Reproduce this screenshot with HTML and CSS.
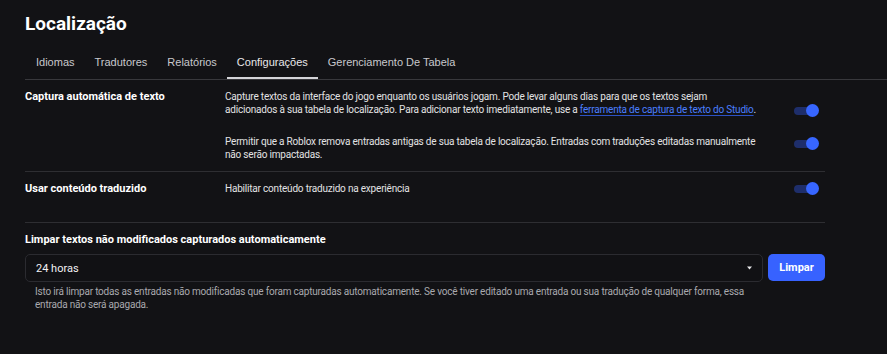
FILE: index.html
```html
<!DOCTYPE html>
<html lang="pt-BR">
  <head>
    <meta charset="UTF-8" />
    <meta name="viewport" content="width=device-width, initial-scale=1.0" />
    <title>Localização</title>
    <link rel="stylesheet" href="styles.css">
  </head>
  <body>
    <div class="page">
      <h1 class="title">Localização</h1>
      <nav class="tabs">
        <a class="tab">Idiomas</a>
        <a class="tab">Tradutores</a>
        <a class="tab">Relatórios</a>
        <a class="tab active">Configurações</a>
        <a class="tab">Gerenciamento De Tabela</a>
      </nav>

      <div class="content">
        <section class="setting">
          <div class="setting-label">Captura automática de texto</div>
          <div class="setting-body">
            <div class="option">
              <p class="option-text">Capture textos da interface do jogo enquanto os usuários jogam. Pode levar alguns dias para que os textos sejam<br>adicionados à sua tabela de localização. Para adicionar texto imediatamente, use a <a class="link">ferramenta de captura de texto do Studio</a>.</p>
              <span class="switch switch-low"></span>
            </div>
            <div class="option">
              <p class="option-text">Permitir que a Roblox remova entradas antigas de sua tabela de localização. Entradas com traduções editadas manualmente<br>não serão impactadas.</p>
              <span class="switch"></span>
            </div>
          </div>
        </section>

        <section class="setting setting-single">
          <div class="setting-label">Usar conteúdo traduzido</div>
          <div class="setting-body">
            <div class="option">
              <p class="option-text">Habilitar conteúdo traduzido na experiência</p>
              <span class="switch switch-flush"></span>
            </div>
          </div>
        </section>

        <section class="cleanup">
          <div class="cleanup-label">Limpar textos não modificados capturados automaticamente</div>
          <div class="cleanup-row">
            <div class="select">
              <span>24 horas</span>
              <svg class="caret" width="5" height="4" viewBox="0 0 5 4"><path d="M0 0.5h5L2.5 3.5z" fill="#e8e8ea"/></svg>
            </div>
            <button class="btn">Limpar</button>
          </div>
          <p class="hint">Isto irá limpar todas as entradas não modificadas que foram capturadas automaticamente. Se você tiver editado uma entrada ou sua tradução de qualquer forma, essa<br>entrada não será apagada.</p>
        </section>
      </div>
    </div>
  </body>
</html>
```

FILE: styles.css
```css
* {
  margin: 0;
  padding: 0;
  box-sizing: border-box;
}
body {
  background-color: #121215;
  color: #e6e6e8;
  font-family: Roboto, "Liberation Sans", sans-serif;
}
.page {
  padding-left: 25px;
}
.title {
  padding-top: 12px;
  font-size: 19px;
  line-height: 24px;
  font-weight: 700;
  color: #ffffff;
}
.tabs {
  display: flex;
  margin-top: 10px;
  border-bottom: 1px solid #38383c;
}
.tab {
  padding: 9px 10px 8px;
  font-family: "Liberation Sans", Arial, sans-serif;
  font-size: 11px;
  line-height: 14px;
  color: #c8c8cc;
  border-bottom: 2px solid transparent;
  cursor: pointer;
}
.tab:first-child {
  padding-left: 11px;
}
.tab.active {
  color: #e8e8ea;
  border-bottom-color: #d4d4d8;
}
.content {
  width: 800px;
}
.setting {
  display: flex;
  padding: 10px 0;
  border-bottom: 1px solid #2e2e32;
}
.setting-single {
  padding-bottom: 27px;
}
.setting-label,
.cleanup-label {
  font-size: 11px;
  line-height: 13px;
  font-weight: 700;
  color: #ffffff;
}
.setting-label {
  width: 200px;
  flex-shrink: 0;
}
.setting-body {
  flex: 1;
  display: flex;
  flex-direction: column;
  gap: 18px;
}
.option {
  display: flex;
  justify-content: space-between;
  align-items: flex-start;
  padding-right: 6px;
}
.option-text {
  font-size: 10px;
  line-height: 13px;
  letter-spacing: -0.2px;
  white-space: nowrap;
  color: #e2e2e4;
}
.link {
  color: #4a7fff;
  text-decoration: underline;
  text-decoration-color: #2d52c4;
  text-underline-offset: 2px;
  cursor: pointer;
}
.switch {
  position: relative;
  width: 25px;
  height: 13px;
  margin-top: 2px;
  flex-shrink: 0;
}
.switch-low {
  margin-top: 14px;
}
.switch-flush {
  margin-top: 0;
}
.switch::before {
  content: "";
  position: absolute;
  left: 0;
  top: 2.5px;
  width: 22px;
  height: 8px;
  border-radius: 4px;
  background: #1e2e6b;
}
.switch::after {
  content: "";
  position: absolute;
  right: 0;
  top: 0;
  width: 13px;
  height: 13px;
  border-radius: 50%;
  background: #3766ff;
}
.cleanup {
  padding-top: 10px;
}
.cleanup-row {
  display: flex;
  align-items: flex-start;
  gap: 5px;
  margin-top: 8px;
}
.select {
  flex: 1;
  height: 28px;
  display: flex;
  align-items: center;
  justify-content: space-between;
  padding: 0 10px;
  border: 1px solid #2b2b30;
  border-radius: 5px;
  background: #111114;
  font-size: 11px;
  color: #f2f2f4;
}
.btn {
  width: 57px;
  height: 27px;
  border: none;
  border-radius: 5px;
  background: #3762ff;
  color: #ffffff;
  font-family: Roboto, "Liberation Sans", sans-serif;
  font-size: 11px;
  font-weight: 700;
  cursor: pointer;
}
.hint {
  margin-top: 3px;
  padding-left: 10px;
  font-size: 10px;
  line-height: 13px;
  letter-spacing: -0.2px;
  color: #a9a9ae;
}
```
